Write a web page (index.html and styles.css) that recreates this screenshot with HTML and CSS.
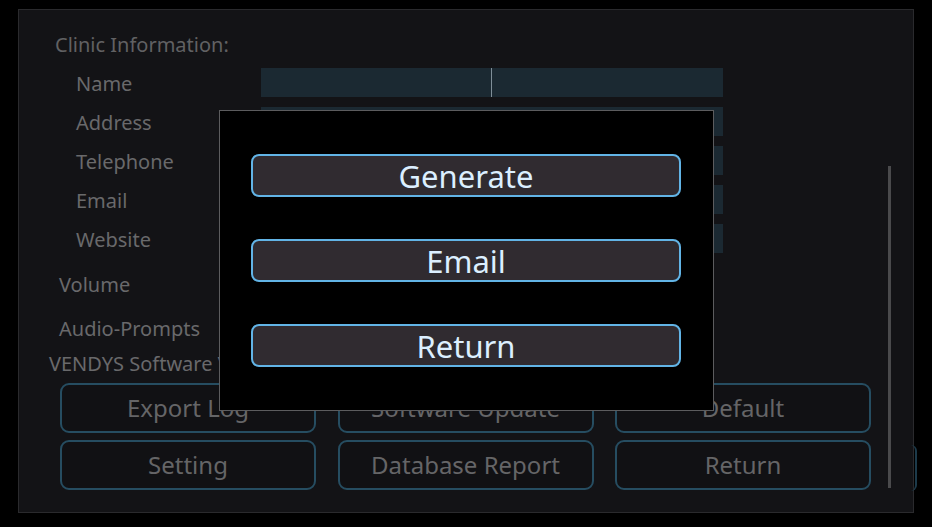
FILE: index.html
```html
<!DOCTYPE html>
<html>
<head>
<meta charset="utf-8">
<link rel="stylesheet" href="styles.css">
</head>
<body>
<div class="screen">
  <div class="panel">
    <div class="section-title">Clinic Information:</div>
    <div class="form">
      <div class="row"><span class="label">Name</span><div class="field"><span class="cursor"></span></div></div>
      <div class="row"><span class="label">Address</span><div class="field"></div></div>
      <div class="row"><span class="label">Telephone</span><div class="field"></div></div>
      <div class="row"><span class="label">Email</span><div class="field"></div></div>
      <div class="row"><span class="label">Website</span><div class="field"></div></div>
    </div>
    <div class="setting volume">Volume</div>
    <div class="setting audio">Audio-Prompts</div>
    <div class="version">VENDYS Software Version: 2.1.0</div>
    <div class="actions">
      <button class="act">Export Log</button>
      <button class="act">Software Update</button>
      <button class="act">Default</button>
      <button class="act">Setting</button>
      <button class="act">Database Report</button>
      <button class="act">Return</button>
    </div>
    <div class="scrollbar"></div>
  </div>
  <div class="edge-btn"></div>
  <div class="modal">
    <button class="mbtn">Generate</button>
    <button class="mbtn">Email</button>
    <button class="mbtn">Return</button>
  </div>
</div>
</body>
</html>
```
FILE: styles.css
```css
html, body {
  margin: 0;
  padding: 0;
  background: #000;
  width: 932px;
  height: 527px;
  overflow: hidden;
  font-family: "Noto Sans", "Open Sans", sans-serif;
}

.screen {
  position: relative;
  width: 932px;
  height: 527px;
  padding: 9px 0 0 18px;
  box-sizing: border-box;
}

.panel {
  position: relative;
  width: 896px;
  height: 504px;
  box-sizing: border-box;
  border: 1px solid #2a2a2d;
  background: #131316;
  padding-top: 21px;
  display: flex;
  flex-direction: column;
}

.section-title {
  font-size: 20px;
  line-height: 27px;
  color: #616163;
  padding-left: 36px;
}

.form {
  margin-top: 10px;
  display: flex;
  flex-direction: column;
  gap: 10px;
}

.row {
  display: flex;
  align-items: center;
  height: 29px;
}

.label {
  width: 185px;
  padding-left: 57px;
  padding-top: 2px;
  font-size: 20px;
  line-height: 27px;
  color: #69696b;
}

.field {
  position: relative;
  width: 462px;
  height: 29px;
  background: #1b2932;
}

.cursor {
  position: absolute;
  left: 230px;
  top: 0;
  width: 1px;
  height: 29px;
  background: #7f8e98;
}

.setting {
  font-size: 20px;
  line-height: 27px;
  color: #69696b;
  padding-left: 40px;
}

.volume { margin-top: 18px; }
.audio { margin-top: 17px; }

.version {
  margin-top: 8px;
  padding-left: 30px;
  font-size: 20px;
  line-height: 27px;
  color: #69696b;
  white-space: nowrap;
}

.actions {
  margin-top: 6px;
  padding-left: 41px;
  display: grid;
  grid-template-columns: repeat(3, 256px);
  grid-auto-rows: 50px;
  column-gap: 21.5px;
  row-gap: 7px;
}

.act {
  box-sizing: border-box;
  border: 2px solid #264d61;
  border-radius: 9px;
  background: #111114;
  color: #656567;
  font-family: "Noto Sans", "Open Sans", sans-serif;
  font-size: 24px;
  line-height: 30px;
  padding: 0;
}

.scrollbar {
  position: absolute;
  left: 869px;
  top: 156px;
  width: 3px;
  height: 322px;
  background: #4a4a4c;
}

.edge-btn {
  position: absolute;
  left: 911px;
  top: 445px;
  width: 4px;
  height: 46px;
  border-right: 2px solid #1c3a4a;
  border-radius: 0 8px 8px 0;
}

.modal {
  position: absolute;
  left: 219px;
  top: 110px;
  width: 495px;
  height: 301px;
  box-sizing: border-box;
  border: 1px solid #5c5c5e;
  background: #000;
  padding: 43px 32px 0 31px;
  display: flex;
  flex-direction: column;
  gap: 42px;
}

.mbtn {
  width: 430px;
  height: 43px;
  box-sizing: border-box;
  border: 2px solid #62b4e6;
  border-radius: 8px;
  background: #302b30;
  color: #dcefff;
  font-family: "Noto Sans", "Open Sans", sans-serif;
  font-size: 31px;
  line-height: 38px;
  padding: 0;
}
```
